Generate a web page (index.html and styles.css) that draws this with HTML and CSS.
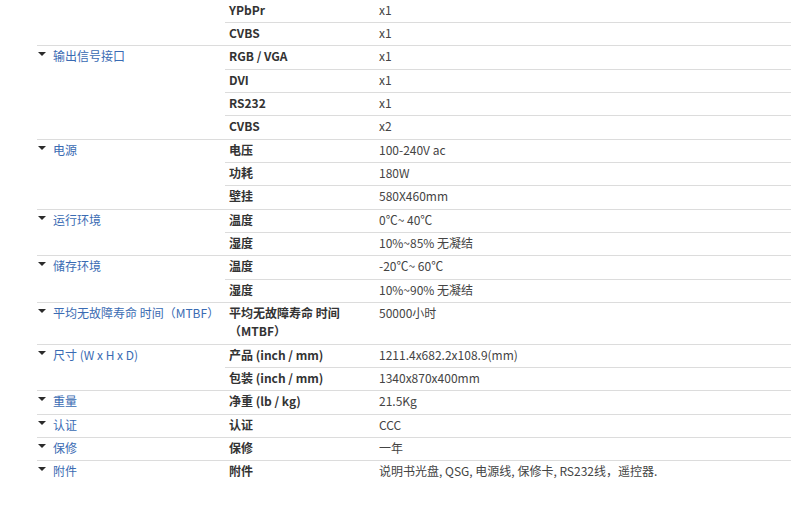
FILE: index.html
```html
<!DOCTYPE html>
<html lang="zh-CN">
<head>
<meta charset="utf-8">
<title>规格参数</title>
<link rel="stylesheet" href="styles.css">
</head>
<body>
<div class="spec">
  <div class="group">
    <div class="cat"></div>
    <div class="items">
      <div class="item"><div class="key">YPbPr</div><div class="val">x1</div></div>
      <div class="item"><div class="key">CVBS</div><div class="val">x1</div></div>
    </div>
  </div>
  <div class="group">
    <div class="cat"><span class="tri"></span><span class="name">输出信号接口</span></div>
    <div class="items">
      <div class="item"><div class="key">RGB / VGA</div><div class="val">x1</div></div>
      <div class="item"><div class="key">DVI</div><div class="val">x1</div></div>
      <div class="item"><div class="key">RS232</div><div class="val">x1</div></div>
      <div class="item"><div class="key">CVBS</div><div class="val">x2</div></div>
    </div>
  </div>
  <div class="group">
    <div class="cat"><span class="tri"></span><span class="name">电源</span></div>
    <div class="items">
      <div class="item"><div class="key">电压</div><div class="val">100-240V ac</div></div>
      <div class="item"><div class="key">功耗</div><div class="val">180W</div></div>
      <div class="item"><div class="key">壁挂</div><div class="val">580X460mm</div></div>
    </div>
  </div>
  <div class="group">
    <div class="cat"><span class="tri"></span><span class="name">运行环境</span></div>
    <div class="items">
      <div class="item"><div class="key">温度</div><div class="val">0℃~ 40℃</div></div>
      <div class="item"><div class="key">湿度</div><div class="val">10%~85% 无凝结</div></div>
    </div>
  </div>
  <div class="group">
    <div class="cat"><span class="tri"></span><span class="name">储存环境</span></div>
    <div class="items">
      <div class="item"><div class="key">温度</div><div class="val">-20℃~ 60℃</div></div>
      <div class="item"><div class="key">湿度</div><div class="val">10%~90% 无凝结</div></div>
    </div>
  </div>
  <div class="group">
    <div class="cat"><span class="tri"></span><span class="name">平均无故障寿命 时间（MTBF）</span></div>
    <div class="items">
      <div class="item"><div class="key">平均无故障寿命 时间（MTBF）</div><div class="val">50000小时</div></div>
    </div>
  </div>
  <div class="group">
    <div class="cat"><span class="tri"></span><span class="name">尺寸 (W x H x D)</span></div>
    <div class="items">
      <div class="item"><div class="key">产品 (inch / mm)</div><div class="val">1211.4x682.2x108.9(mm)</div></div>
      <div class="item"><div class="key">包装 (inch / mm)</div><div class="val">1340x870x400mm</div></div>
    </div>
  </div>
  <div class="group">
    <div class="cat"><span class="tri"></span><span class="name">重量</span></div>
    <div class="items">
      <div class="item"><div class="key">净重 (lb / kg)</div><div class="val">21.5Kg</div></div>
    </div>
  </div>
  <div class="group">
    <div class="cat"><span class="tri"></span><span class="name">认证</span></div>
    <div class="items">
      <div class="item"><div class="key">认证</div><div class="val">CCC</div></div>
    </div>
  </div>
  <div class="group">
    <div class="cat"><span class="tri"></span><span class="name">保修</span></div>
    <div class="items">
      <div class="item"><div class="key">保修</div><div class="val">一年</div></div>
    </div>
  </div>
  <div class="group">
    <div class="cat"><span class="tri"></span><span class="name">附件</span></div>
    <div class="items">
      <div class="item"><div class="key">附件</div><div class="val">说明书光盘, QSG, 电源线, 保修卡, RS232线，遥控器.</div></div>
    </div>
  </div>
</div>
</body>
</html>
```

FILE: styles.css
```css
html, body {
  margin: 0;
  padding: 0;
  background: #fff;
}

body {
  font-family: "Noto Sans CJK SC", "Noto Sans", sans-serif;
  font-size: 12px;
  line-height: 18.333px;
  color: #444;
}

.spec {
  width: 754px;
  margin: -1.333px 0 0 37px;
}

.group {
  display: flex;
  border-top: 1px solid #dcdcdc;
}

.cat {
  width: 188px;
  flex: none;
  display: flex;
  align-items: flex-start;
  padding: 1px 0 3px;
  color: #3a6bb3;
}

.tri {
  flex: none;
  width: 0;
  height: 0;
  border-left: 4px solid transparent;
  border-right: 4px solid transparent;
  border-top: 4px solid #2b2b2b;
  margin: 5px 7px 0 1px;
}

.items {
  flex: 1;
}

.item {
  display: flex;
  border-top: 1px solid #dcdcdc;
}

.item:first-child {
  border-top: none;
}

.key {
  width: 146px;
  flex: none;
  padding: 1px 0 3px 4px;
  font-weight: bold;
  color: #333;
}

.val {
  flex: 1;
  padding: 1px 0 3px 4px;
}
```
